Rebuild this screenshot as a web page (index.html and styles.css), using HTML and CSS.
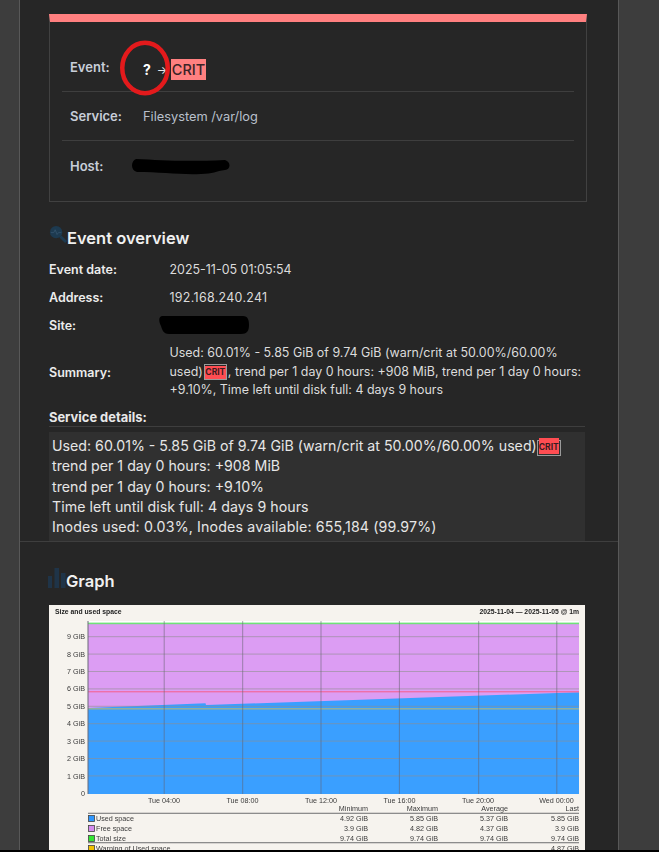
FILE: index.html
```html
<!DOCTYPE html>
<html lang="en">
<head>
<meta charset="utf-8">
<title>Event notification</title>
<link rel="stylesheet" href="styles.css">
</head>
<body>
<div class="shell">
  <div class="gutter gutter-left"></div>
  <main class="page">
    <section class="top">
      <div class="card">
        <div class="card-row event-row">
          <span class="card-label">Event:</span>
          <span class="card-value event-value"><b class="q">?</b> <span class="arrow">→</span><span class="crit-big">CRIT</span></span>
        </div>
        <div class="card-row service-row">
          <span class="card-label">Service:</span>
          <span class="card-value">Filesystem /var/log</span>
        </div>
        <div class="card-row host-row">
          <span class="card-label">Host:</span>
          <span class="card-value"></span>
        </div>
        <svg class="circle" viewBox="0 0 54 60"><ellipse cx="27" cy="30" rx="22.750" ry="25.250"/></svg>
        <svg class="scribble scribble-host" viewBox="0 0 100 18"><path d="M5 2 C30 3 50 5 94 3 C100 5 100 12 94 13 C85 14 82 17 70 17 C50 18 30 15 6 15 C-1 13 0 4 5 2Z"/></svg>
      </div>

      <h2 class="heading">
        <svg class="head-icon" viewBox="0 0 20 20"><circle cx="7.5" cy="7.5" r="6.5"/><path class="handle" d="M12 12 L18 18"/><path class="pulse" d="M2 8 H5 L6.5 5 L8.5 10 L10 8 H13"/></svg>
        Event overview
      </h2>

      <div class="facts">
        <div class="fact-label">Event date:</div><div class="fact-value">2025-11-05 01:05:54</div>
        <div class="fact-label">Address:</div><div class="fact-value ip">192.168.240.241</div>
        <div class="fact-label">Site:</div>
        <div class="fact-value"><svg class="scribble-site" viewBox="0 0 90 18"><path d="M3 0 H84 C89 0 90 4 90 9 C90 15 88 18 82 18 H10 C4 18 3 13 2 10 C0 6 -1 1 3 0Z"/></svg></div>
        <div class="fact-label summary-label">Summary:</div>
        <div class="fact-value summary">Used: 60.01% - 5.85 GiB of 9.74 GiB (warn/crit at 50.00%/60.00% used)<span class="badge"><span class="badge-fill">CRIT</span></span>, trend per 1 day 0 hours: +908 MiB, trend per 1 day 0 hours: +9.10%, Time left until disk full: 4 days 9 hours</div>
      </div>

      <div class="details-title">Service details:</div>
      <div class="details">
        <div>Used: 60.01% - 5.85 GiB of 9.74 GiB (warn/crit at 50.00%/60.00% used)<span class="badge badge-raised"><span class="badge-fill">CRIT</span></span></div>
        <div>trend per 1 day 0 hours: +908 MiB</div>
        <div>trend per 1 day 0 hours: +9.10%</div>
        <div class="loose-line">Time left until disk full: 4 days 9 hours</div>
        <div class="inodes-line">Inodes used: 0.03%, Inodes available: 655,184 (99.97%)</div>
      </div>
    </section>

    <section class="graph-section">
      <h2 class="heading graph-heading">
        <svg class="bars-icon" viewBox="0 0 18 20"><rect x="0" y="8" width="4" height="12"/><rect x="6.5" y="0" width="4.5" height="20"/><rect x="13" y="5" width="4.5" height="15"/></svg>
        Graph
      </h2>
      <figure class="chart">
        <svg class="chart-svg" width="536" height="245" viewBox="49 605 536 245">
          <text class="t-title" x="55" y="614">Size and used space</text>
          <text class="t-title end" x="579" y="614">2025-11-04 — 2025-11-05 @ 1m</text>

          <rect x="88" y="621" width="491" height="173" fill="#ffffff"/>
          <rect x="88" y="624" width="491" height="170" fill="#dc9df3"/>
          <path d="M88 708 L205.5 703.3 L206 705 L579 692.3 V794 H88Z" fill="#3a9fff"/>
          <rect x="88" y="622.6" width="491" height="1.6" fill="#6fe27a"/>

          <g class="grid">
            <path d="M88 636.7H579M88 654.1H579M88 671.5H579M88 688.9H579M88 706.3H579M88 723.7H579M88 741.1H579M88 758.5H579M88 775.9H579"/>
          </g>
          <rect x="88" y="691" width="491" height="1.4" fill="#ee6fa8"/>
          <rect x="88" y="708" width="491" height="1.6" fill="#8fb0a0"/>
          <g class="vgrid">
            <path d="M164.2 621V794M242.7 621V794M321 621V794M399.4 621V794M478.7 621V794M556.8 621V794"/>
          </g>
          <path d="M88 621V794" stroke="#6b6b78" stroke-width="1"/>

          <g class="t-axis end">
            <text x="85" y="639">9 GiB</text>
            <text x="85" y="656.5">8 GiB</text>
            <text x="85" y="674">7 GiB</text>
            <text x="85" y="691">6 GiB</text>
            <text x="85" y="708.500">5 GiB</text>
            <text x="85" y="726">4 GiB</text>
            <text x="85" y="743.500">3 GiB</text>
            <text x="85" y="761">2 GiB</text>
            <text x="85" y="778.500">1 GiB</text>
            <text x="85" y="796">0</text>
          </g>
          <g class="t-axis mid">
            <text x="164" y="802.500">Tue 04:00</text>
            <text x="242.500" y="802.500">Tue 08:00</text>
            <text x="321" y="802.500">Tue 12:00</text>
            <text x="399.500" y="802.500">Tue 16:00</text>
            <text x="478" y="802.500">Tue 20:00</text>
            <text x="556.500" y="802.500">Wed 00:00</text>
          </g>

          <g class="t-axis end">
            <text x="368" y="811">Minimum</text>
            <text x="438" y="811">Maximum</text>
            <text x="508" y="811">Average</text>
            <text x="579" y="811">Last</text>
          </g>
          <rect x="88" y="812.700" width="491" height="1.300" fill="#8c8c8c"/>
          <rect x="88" y="842" width="491" height="1.300" fill="#8c8c8c"/>

          <g class="swatches">
            <rect x="88.500" y="815.500" width="6" height="6" fill="#2f97ff"/>
            <rect x="88.500" y="825.500" width="6" height="6" fill="#d58cf0"/>
            <rect x="88.500" y="835.500" width="6" height="6" fill="#33e633"/>
            <rect x="88.500" y="845.500" width="6" height="6" fill="#f2c200"/>
          </g>
          <g class="t-axis">
            <text x="96" y="821">Used space</text>
            <text x="96" y="831">Free space</text>
            <text x="96" y="841">Total size</text>
            <text x="96" y="851">Warning of Used space</text>
          </g>
          <g class="t-axis end">
            <text x="368" y="821">4.92 GiB</text><text x="438" y="821">5.85 GiB</text><text x="508" y="821">5.37 GiB</text><text x="579" y="821">5.85 GiB</text>
            <text x="368" y="831">3.9 GiB</text><text x="438" y="831">4.82 GiB</text><text x="508" y="831">4.37 GiB</text><text x="579" y="831">3.9 GiB</text>
            <text x="368" y="841">9.74 GiB</text><text x="438" y="841">9.74 GiB</text><text x="508" y="841">9.74 GiB</text><text x="579" y="841">9.74 GiB</text>
            <text x="579" y="851">4.87 GiB</text>
          </g>
        </svg>
      </figure>
    </section>
  </main>
  <div class="gutter gutter-right"></div>
</div>
</body>
</html>
```

FILE: styles.css
```css
* { box-sizing: border-box; }
html, body { margin: 0; padding: 0; }
body {
  width: 659px;
  height: 852px;
  overflow: hidden;
  background: #000;
  font-family: Inter, "Liberation Sans", sans-serif;
}
.shell {
  display: flex;
  height: 850px;
  overflow: hidden;
}
.gutter { background: #3d3d3d; flex: none; }
.gutter-left { width: 19px; }
.gutter-right { flex: 1; }
.page {
  width: 600px;
  flex: none;
  background: #262626;
  border-left: 1px solid #585858;
  border-right: 1px solid #585858;
  color: #e4e4e4;
}
.top { padding: 14px 32px 0 29px; border-bottom: 1px solid #3e3e3e; height: 542px; }

.card {
  position: relative;
  width: 538px;
  height: 188px;
  border: 1px solid #414141;
  border-top: 8px solid #ff8080;
  margin-bottom: 26px;
  padding: 0 12px;
}
.card-row {
  display: flex;
  align-items: center;
  padding-left: 8px;
  height: 49px;
  border-bottom: 1px solid #3e3e3e;
  font-size: 13px;
}
.event-row { height: 70px; padding-top: 22px; }
.event-row .card-label { position: relative; top: -1px; }
.host-row { border-bottom: none; }
.card-label { width: 73px; font-weight: 600; color: #c8ced9; }
.card-value { color: #b9c0cc; font-size: 12.800px; }
.event-value { display: flex; align-items: center; color: #fff; position: relative; top: 2px; }
.q { font-size: 14px; font-weight: 700; margin-right: 6px; }
.arrow { color: #e8e8e8; font-size: 11px; width: 14px; }
.crit-big {
  background: #ff8080;
  color: #3b2326;
  font-size: 14.500px;
  font-weight: 500;
  line-height: 21px;
  padding: 0 1px;
}
.circle {
  position: absolute;
  left: 68px;
  top: 16px;
  width: 54px;
  height: 60px;
  fill: none;
  stroke: #e31a1c;
  stroke-width: 4.500;
}
.scribble { position: absolute; fill: #000; }
.scribble-host { left: 81px; top: 135px; width: 100px; height: 18px; }

.heading {
  display: flex;
  align-items: flex-end;
  margin: 0;
  color: #f0f0f0;
  font-size: 16.500px;
  font-weight: 600;
  line-height: 20px;
  height: 20px;
}
.head-icon { width: 19px; height: 19px; flex: none; position: relative; top: -4px; overflow: visible; margin-right: -1px; }
.head-icon circle { fill: #1d3a50; }
.head-icon .handle { stroke: #1d3a50; stroke-width: 3; fill: none; }
.head-icon .pulse { stroke: #36566f; stroke-width: 0.8; fill: none; }

.facts {
  display: grid;
  grid-template-columns: 120.500px 417px;
  grid-template-rows: 28px 28px 28px 61px;
  margin-top: 7px;
  font-size: 12.450px;
  align-items: center;
}
.fact-label { font-weight: 600; color: #ececec; font-size: 12.500px; }
.fact-value { color: #dcdcdc; }
.ip { letter-spacing: 0.3px; }
.scribble-site { display: block; width: 90px; height: 18px; margin-left: -11px; fill: #000; }
.summary-label { padding-top: 5px; }
.summary { line-height: 18.500px; padding-top: 5px; }
.badge {
  display: inline-block;
  width: 23px;
  height: 16px;
  margin: -4px 1px -4px 1px;
  border: 1px solid #9a9a9a;
  vertical-align: 1px;
  line-height: 12px;
  text-align: center;
}
.badge-fill {
  display: block;
  background: #ff4d52;
  color: #3a1c20;
  font-size: 8.500px;
  font-weight: 700;
  line-height: 13px;
  height: 13px;
  margin: 1px 0 0;
}
.badge-raised { width: 24px; vertical-align: 1.500px; margin-left: 0; }
.badge-raised .badge-fill { margin: -3px 1px 0; height: 16px; line-height: 19px; }

.details-title {
  margin-top: 10px;
  height: 17px;
  font-size: 12.900px;
  line-height: 16px;
  font-weight: 700;
  color: #e8e8e8;
  width: 536px;
  border-bottom: 1px solid #3e3e3e;
}
.details {
  margin-top: 5px;
  width: 536px;
  height: 109px;
  padding: 4px 3px 0;
  background: #303030;
  color: #e6e6e6;
  font-size: 14.200px;
  line-height: 20.300px;
  white-space: nowrap;
}
.loose-line { letter-spacing: 0.05px; }
.inodes-line { letter-spacing: 0.15px; }

.graph-section { padding: 29px 0 0 29px; }
.graph-heading { height: 20px; }
.bars-icon { width: 18px; height: 20px; flex: none; fill: #1f3448; position: relative; top: -3px; margin-left: -1px; margin-right: 0; }
.chart {
  margin: 14px 0 0;
  width: 536px;
  height: 245px;
  background: #f6f3ee;
  overflow: hidden;
}
.chart-svg { display: block; filter: blur(0.3px); }
.t-title { font: 700 6.800px "Liberation Sans", sans-serif; fill: #222; }
.t-axis { font: 7.200px "Liberation Sans", sans-serif; fill: #3b3b3b; }
.end { text-anchor: end; }
.mid { text-anchor: middle; }
.grid path { stroke: #8f8f8f; stroke-opacity: 0.6; stroke-width: 1; fill: none; }
.vgrid path { stroke: #62606e; stroke-opacity: 0.55; stroke-width: 1; fill: none; }
.swatches rect { stroke: #444; stroke-width: 0.8; }
```
